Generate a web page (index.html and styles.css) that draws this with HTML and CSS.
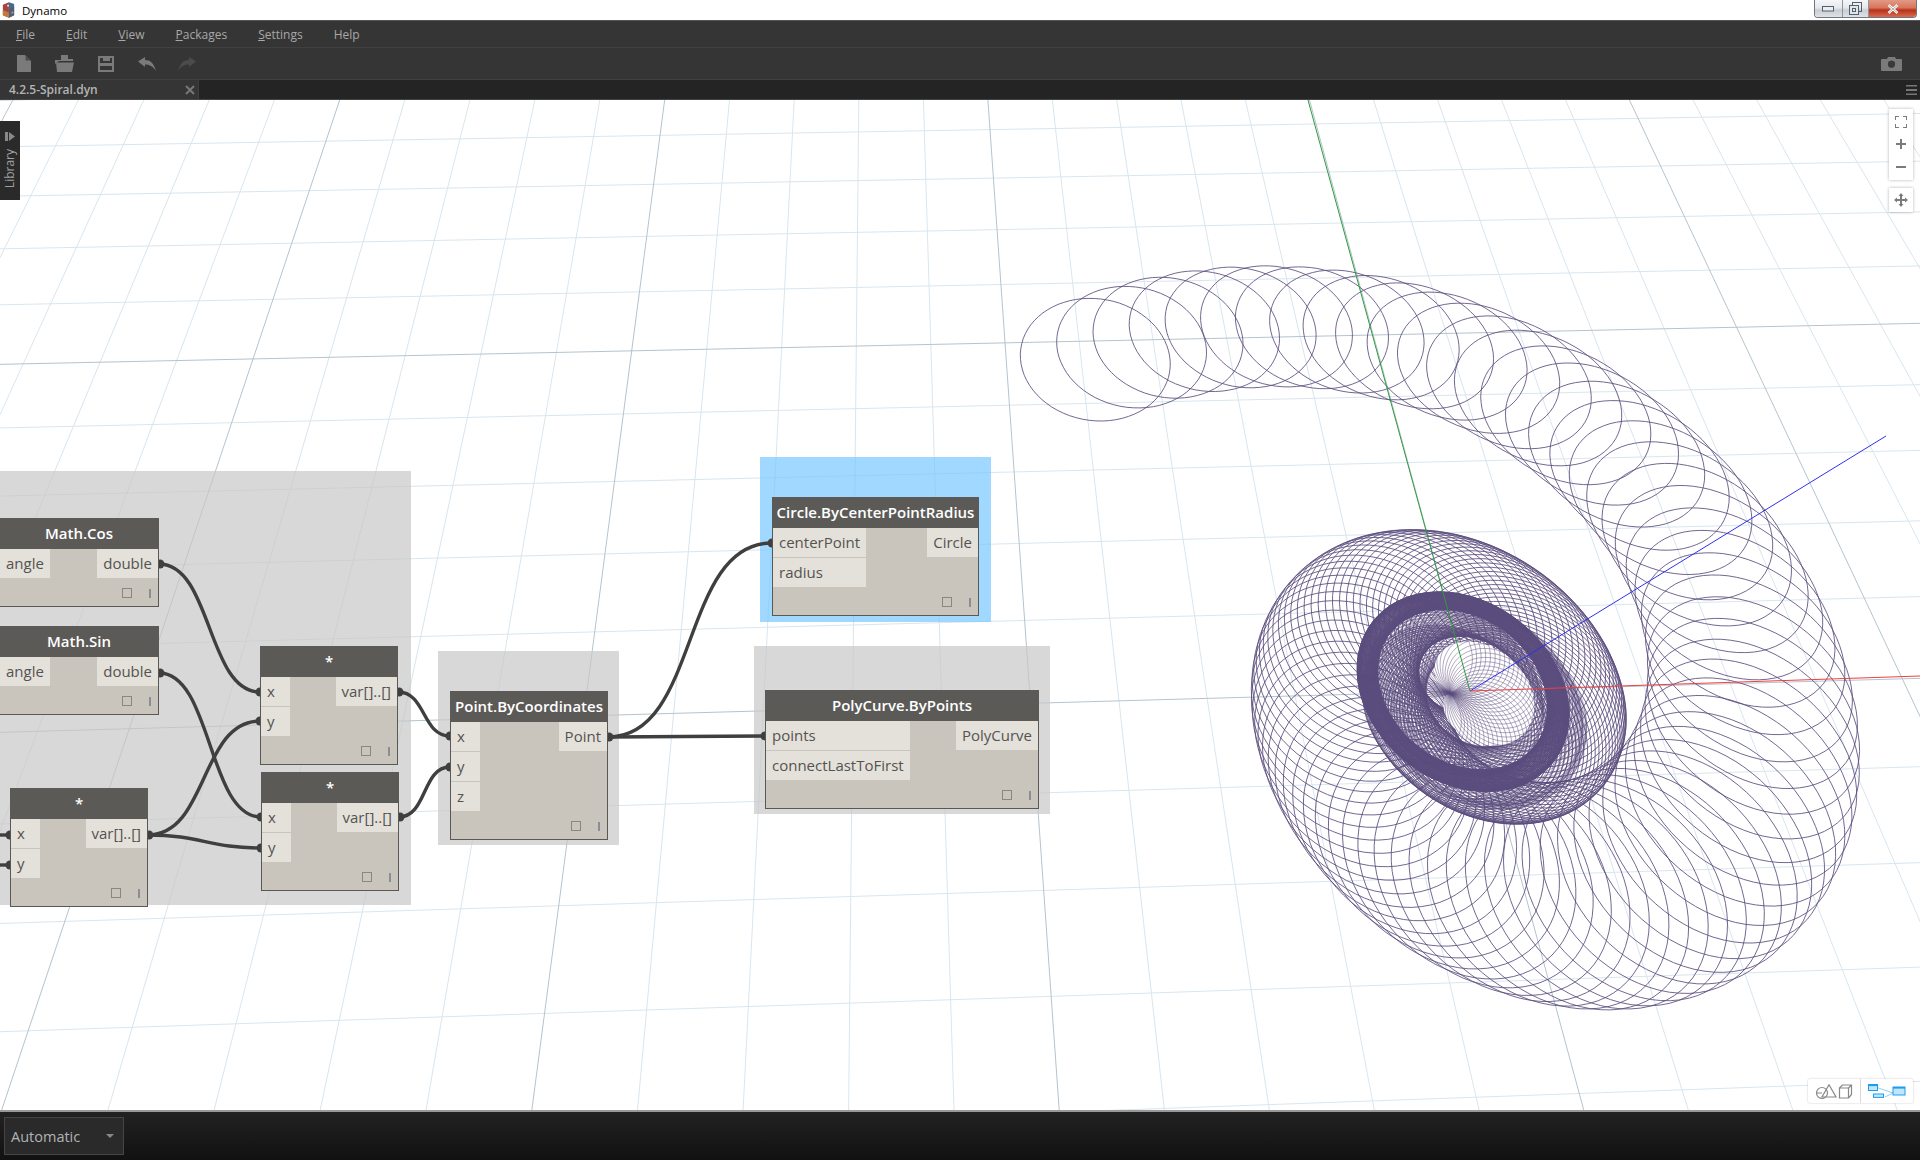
FILE: index.html
```html
<!DOCTYPE html>
<html lang="en">
<head>
<meta charset="utf-8">
<title>Dynamo</title>
<link rel="stylesheet" href="styles.css">
</head>
<body>
<header class="titlebar">
  <svg class="app-logo" viewBox="0 0 15 18"><polygon points="1,3 8,0 8,18 1,15" fill="#a8433f"/><polygon points="8,0 14,2 14,15 8,18" fill="#3f6f8c"/><polygon points="8,8 14,5 14,15 8,18" fill="#5a5a78"/><polygon points="1,9 8,12 8,18 1,15" fill="#c07a3a"/><rect x="6" y="3" width="2" height="2" fill="#e8e8e8"/><rect x="11" y="11" width="2" height="2" fill="#7fbf8a"/></svg>
  <span class="app-name">Dynamo</span>
  <div class="win-buttons">
    <div class="win-btn win-min"><svg width="13" height="6" viewBox="0 0 13 6"><rect x="0.5" y="0.5" width="11" height="4.5" fill="#e8eef4" stroke="#56606c"/></svg></div>
    <div class="win-btn win-max"><svg width="13" height="13" viewBox="0 0 13 13"><rect x="3.5" y="0.5" width="9" height="9" fill="none" stroke="#56606c"/><rect x="0.5" y="3.5" width="9" height="9" fill="#e0e6ec" stroke="#56606c"/><rect x="3.5" y="6.5" width="3" height="3" fill="none" stroke="#56606c"/></svg></div>
    <div class="win-btn win-close"><svg width="12" height="10" viewBox="0 0 12 10"><path d="M1.5 1 L10.5 9 M10.5 1 L1.5 9" stroke="#fff" stroke-width="2.6"/><path d="M1.5 1 L10.5 9 M10.5 1 L1.5 9" stroke="#5a5a5a" stroke-width="0.5"/></svg></div>
  </div>
</header>
<nav class="menubar">
  <span class="menu-item"><u>F</u>ile</span>
  <span class="menu-item"><u>E</u>dit</span>
  <span class="menu-item"><u>V</u>iew</span>
  <span class="menu-item"><u>P</u>ackages</span>
  <span class="menu-item"><u>S</u>ettings</span>
  <span class="menu-item">Help</span>
</nav>
<div class="toolbar">
  <svg class="tool tool-new" viewBox="0 0 14 17"><path d="M0 0 H8 L14 6 V17 H0 Z" fill="#7a7a7a"/><path d="M8.6 0 L14 5.4 H8.6 Z" fill="#4c4c4c"/></svg>
  <svg class="tool tool-open" viewBox="0 0 20 17"><path d="M6 0 H13 V4 H18 V6 H4 L0 9 V5 H6 Z" fill="#7a7a7a"/><path d="M1 7.5 H19 L17 17 H2 Z" fill="#7a7a7a"/></svg>
  <svg class="tool tool-save" viewBox="0 0 16 16"><path d="M0 0 H16 V16 H0 Z M2 2 V7 H14 V2 Z M2 10 V14 H14 V10 Z" fill-rule="evenodd" fill="#7a7a7a"/><rect x="5" y="2" width="7" height="3" fill="#7a7a7a"/></svg>
  <svg class="tool tool-undo" viewBox="0 0 18 14"><path d="M0 4.5 L7 0 V3 C12 3 16 6 18 14 C15 9 11 7.5 7 7.5 V10 Z" fill="#7a7a7a"/></svg>
  <svg class="tool tool-redo" viewBox="0 0 18 14"><path d="M18 4.5 L11 0 V3 C6 3 2 6 0 14 C3 9 7 7.5 11 7.5 V10 Z" fill="#4b4b4b"/></svg>
  <svg class="tool tool-camera" viewBox="0 0 21 14"><path d="M1 2 H6 L7 0 H14 L15 2 H20 Q21 2 21 3 V13 Q21 14 20 14 H1 Q0 14 0 13 V3 Q0 2 1 2 Z M10.5 3.8 A3.4 3.4 0 1 0 10.5 10.6 A3.4 3.4 0 1 0 10.5 3.8 Z" fill-rule="evenodd" fill="#7a7a7a"/><circle cx="10.5" cy="7.2" r="3.4" fill="#3a3a3a"/></svg>
</div>
<div class="tabbar">
  <div class="tab"><span class="tab-name">4.2.5-Spiral.dyn</span><svg class="tab-x" viewBox="0 0 10 10"><path d="M1 1 L9 9 M9 1 L1 9" stroke="#777" stroke-width="2"/></svg></div>
  <svg class="tab-menu" viewBox="0 0 11 10"><path d="M0 0.5 H11 M0 5 H11 M0 9.5 H11" stroke="#777" stroke-width="2"/></svg>
</div>
<main class="canvas">
  <svg class="layer" id="scene" viewBox="0 100 1920 1010"></svg>
  <div class="group group-math"></div>
  <div class="group group-point"></div>
  <div class="group group-poly"></div>
  <div class="group group-circle"></div>
  <svg class="layer" viewBox="0 100 1920 1010">
    <g class="wires">
      <path d="M159 564 C212 564 207 692 260 692"/>
      <path d="M159 673 C212 673 208 817 261 817"/>
      <path d="M148 835 C208 835 200 721 260 721"/>
      <path d="M148 835 C200 835 210 848 261 848"/>
      <path d="M398 692 C426 692 422 736 450 736"/>
      <path d="M399 817 C427 817 422 767 450 767"/>
      <path d="M608 737 C700 737 680 543 772 543"/>
      <path d="M608 737 C680 737 690 736 765 736"/>
      <path d="M0 835 H10"/>
      <path d="M0 865 H10"/>
    </g>
    <g class="nubs">
      <circle cx="160" cy="564" r="4.5"/><circle cx="160" cy="673" r="4.5"/>
      <circle cx="260" cy="692" r="4.5"/><circle cx="260" cy="721" r="4.5"/>
      <circle cx="399" cy="692" r="4.5"/><circle cx="261" cy="817" r="4.5"/>
      <circle cx="261" cy="848" r="4.5"/><circle cx="400" cy="817" r="4.5"/>
      <circle cx="149" cy="835" r="4.5"/><circle cx="10" cy="835" r="4.5"/>
      <circle cx="10" cy="865" r="4.5"/><circle cx="450" cy="736" r="4.5"/>
      <circle cx="450" cy="767" r="4.5"/><circle cx="609" cy="737" r="4.5"/>
      <circle cx="772" cy="543" r="4.5"/><circle cx="765" cy="736" r="4.5"/>
    </g>
  </svg>

  <section class="node node-cos">
    <div class="node-title">Math.Cos</div>
    <div class="node-body"><div class="ports"><div class="port">angle</div></div><div class="ports ports-out"><div class="port">double</div></div></div>
    <div class="node-foot"><span class="foot-box"></span><span class="foot-bar"></span></div>
  </section>
  <section class="node node-sin">
    <div class="node-title">Math.Sin</div>
    <div class="node-body"><div class="ports"><div class="port">angle</div></div><div class="ports ports-out"><div class="port">double</div></div></div>
    <div class="node-foot"><span class="foot-box"></span><span class="foot-bar"></span></div>
  </section>
  <section class="node node-mul-a">
    <div class="node-title">*</div>
    <div class="node-body"><div class="ports"><div class="port">x</div><div class="port">y</div></div><div class="ports ports-out"><div class="port">var[]..[]</div></div></div>
    <div class="node-foot"><span class="foot-box"></span><span class="foot-bar"></span></div>
  </section>
  <section class="node node-mul-b">
    <div class="node-title">*</div>
    <div class="node-body"><div class="ports"><div class="port">x</div><div class="port">y</div></div><div class="ports ports-out"><div class="port">var[]..[]</div></div></div>
    <div class="node-foot"><span class="foot-box"></span><span class="foot-bar"></span></div>
  </section>
  <section class="node node-mul-c">
    <div class="node-title">*</div>
    <div class="node-body"><div class="ports"><div class="port">x</div><div class="port">y</div></div><div class="ports ports-out"><div class="port">var[]..[]</div></div></div>
    <div class="node-foot"><span class="foot-box"></span><span class="foot-bar"></span></div>
  </section>
  <section class="node node-point">
    <div class="node-title">Point.ByCoordinates</div>
    <div class="node-body"><div class="ports"><div class="port">x</div><div class="port">y</div><div class="port">z</div></div><div class="ports ports-out"><div class="port">Point</div></div></div>
    <div class="node-foot"><span class="foot-box"></span><span class="foot-bar"></span></div>
  </section>
  <section class="node node-circle">
    <div class="node-title">Circle.ByCenterPointRadius</div>
    <div class="node-body"><div class="ports"><div class="port">centerPoint</div><div class="port">radius</div></div><div class="ports ports-out"><div class="port">Circle</div></div></div>
    <div class="node-foot"><span class="foot-box"></span><span class="foot-bar"></span></div>
  </section>
  <section class="node node-poly">
    <div class="node-title">PolyCurve.ByPoints</div>
    <div class="node-body"><div class="ports"><div class="port">points</div><div class="port">connectLastToFirst</div></div><div class="ports ports-out"><div class="port">PolyCurve</div></div></div>
    <div class="node-foot"><span class="foot-box"></span><span class="foot-bar"></span></div>
  </section>

  <aside class="library">
    <svg class="library-icon" viewBox="0 0 10 9"><rect x="0" y="0" width="3" height="9" fill="#888"/><polygon points="4,0 10,4.5 4,9" fill="#888"/></svg>
    <span class="library-label">Library</span>
  </aside>

  <div class="nav-stack">
    <div class="nav-box nav-zoom">
      <svg class="nav-icon" viewBox="0 0 12 12"><path d="M0 4 V0 H4 M8 0 H12 V4 M12 8 V12 H8 M4 12 H0 V8" fill="none" stroke="#7b7b7b" stroke-width="2"/></svg>
      <svg class="nav-icon" viewBox="0 0 12 12"><path d="M6 1 V11 M1 6 H11" stroke="#7b7b7b" stroke-width="2"/></svg>
      <svg class="nav-icon" viewBox="0 0 12 12"><path d="M1 6 H11" stroke="#7b7b7b" stroke-width="2"/></svg>
    </div>
    <div class="nav-box nav-pan">
      <svg class="nav-icon" viewBox="0 0 14 14"><path d="M7 0 L9.5 3 H8 V6 H11 V4.5 L14 7 L11 9.5 V8 H8 V11 H9.5 L7 14 L4.5 11 H6 V8 H3 V9.5 L0 7 L3 4.5 V6 H6 V3 H4.5 Z" fill="#7b7b7b"/></svg>
    </div>
  </div>

  <div class="view-toggle">
    <div class="toggle-half">
      <svg class="toggle-geo" viewBox="0 0 38 15"><circle cx="7" cy="9" r="5.5" fill="none" stroke="#888" stroke-width="1.2"/><path d="M14 0.8 L21 13 H7 Z M1.5 9 H7" fill="none" stroke="#888" stroke-width="1.2"/><path d="M24.5 4 H33.5 V14 H24.5 Z M24.5 4 L27.5 1 H36.5 V10.5 L33.5 14 M33.5 4 L36.5 1" fill="none" stroke="#888" stroke-width="1.2"/></svg>
    </div>
    <div class="toggle-half toggle-graph">
      <svg class="toggle-net" viewBox="0 0 38 15"><path d="M9 3.5 L25 9 M17 13 L25 9" stroke="#8fd0f5" stroke-width="1"/><rect x="0.5" y="0.5" width="9" height="6" fill="#bfe6fb" stroke="#1e9df0"/><rect x="0.5" y="0.5" width="9" height="1.6" fill="#1e9df0"/><rect x="5.5" y="10" width="10" height="3.4" fill="#bfe6fb" stroke="#1e9df0"/><rect x="25" y="3" width="12" height="8" fill="#bfe6fb" stroke="#1e9df0"/><rect x="25" y="3" width="12" height="1.6" fill="#1e9df0"/></svg>
    </div>
  </div>
</main>
<footer class="statusbar">
  <div class="run-select"><span class="run-label">Automatic</span><span class="run-arrow"></span></div>
</footer>
<script src="script.js"></script>
</body>
</html>
```
FILE: styles.css
```css
* { box-sizing: border-box; }
html, body { margin: 0; padding: 0; }
body {
  width: 1920px;
  height: 1160px;
  overflow: hidden;
  display: flex;
  flex-direction: column;
  font-family: "Open Sans", "Liberation Sans", sans-serif;
  background: #fff;
}
.titlebar {
  height: 21px;
  flex: none;
  display: flex;
  align-items: flex-start;
  background: #fff;
  border-bottom: 1px solid #555;
}
.app-logo { width: 13px; height: 16px; margin: 2px 0 0 2px; }
.app-name { font-size: 11.5px; line-height: 21px; margin-left: 7px; color: #000; }
.win-buttons {
  margin-left: auto;
  margin-right: 3px;
  height: 18px;
  display: flex;
  border: 1px solid #6f7780;
  border-top: none;
  border-radius: 0 0 4px 4px;
  overflow: hidden;
}
.win-btn { display: flex; align-items: center; justify-content: center; }
.win-min, .win-max {
  background: linear-gradient(#f4f6f8 0, #e6e9ec 45%, #c9ced3 60%, #dfe3e6 100%);
  border-right: 1px solid #8d949b;
}
.win-min { width: 28px; }
.win-max { width: 26px; }
.win-close { width: 47px; background: linear-gradient(#e09a86 0, #d9755c 45%, #b8321c 60%, #d96a50 100%); }

.menubar {
  height: 27px;
  flex: none;
  display: flex;
  align-items: center;
  padding-left: 16px;
  gap: 31px;
  background: #353535;
  border-bottom: 1px solid #404040;
}
.menu-item { font-size: 12px; color: #a8a8a8; }

.toolbar {
  height: 32px;
  flex: none;
  display: flex;
  align-items: center;
  background: #353535;
  border-bottom: 1px solid #404040;
}
.tool { flex: none; }
.tool-new { width: 14px; height: 17px; margin-left: 17px; }
.tool-open { width: 20px; height: 17px; margin-left: 24px; }
.tool-save { width: 16px; height: 16px; margin-left: 23px; }
.tool-undo { width: 18px; height: 14px; margin-left: 24px; }
.tool-redo { width: 18px; height: 14px; margin-left: 22px; }
.tool-camera { width: 21px; height: 14px; margin-left: auto; margin-right: 18px; }

.tabbar {
  height: 20px;
  flex: none;
  display: flex;
  align-items: center;
  background: #242424;
  border-bottom: 1px solid #444;
}
.tab {
  width: 199px;
  height: 19px;
  display: flex;
  align-items: center;
  padding: 0 3px 0 9px;
  background: #353535;
  border-right: 1px solid #3f3f3f;
}
.tab-name { font-size: 12px; font-weight: 600; color: #b4b4b4; }
.tab-x { width: 10px; height: 10px; margin-left: auto; }
.tab-menu { width: 11px; height: 10px; margin-left: auto; margin-right: 3px; }

.canvas {
  position: relative;
  flex: 1;
  overflow: hidden;
  background: #fff;
}
.layer { position: absolute; left: 0; top: 0; width: 1920px; height: 1010px; }
.grid-minor { stroke: #d8e6ef; stroke-width: 1; fill: none; }
.grid-major { stroke: #b4c4ce; stroke-width: 1; fill: none; }
.ring { stroke: #5b4c7c; stroke-width: 1; stroke-opacity: .85; fill: none; }
.ring-thin { stroke: #5b4c7c; stroke-width: .8; stroke-opacity: .6; fill: none; }
.hole { fill: #fff; stroke: none; }
.axis-x { stroke: #f04040; stroke-width: 1; fill: none; }
.axis-y { stroke: #2f9a3c; stroke-width: 1; fill: none; }
.axis-z { stroke: #3030ee; stroke-width: 1; fill: none; }

.group { position: absolute; }
.group-math { left: 0; top: 371px; width: 411px; height: 434px; background: rgba(200,200,200,.7); }
.group-point { left: 438px; top: 551px; width: 181px; height: 194px; background: rgba(200,200,200,.7); }
.group-poly { left: 754px; top: 546px; width: 296px; height: 168px; background: rgba(200,200,200,.7); }
.group-circle { left: 760px; top: 357px; width: 231px; height: 165px; background: rgba(120,200,255,.7); }

.wires path { fill: none; stroke: #3f3f3f; stroke-width: 3.4; }
.nubs circle { fill: #3f3f3f; }

.node {
  position: absolute;
  display: flex;
  flex-direction: column;
  background: #c9c5bd;
  border: 1px solid #5a5855;
  border-top: none;
}
.node-cos { left: -1px; top: 418px; width: 160px; }
.node-sin { left: -1px; top: 526px; width: 160px; }
.node-mul-a { left: 260px; top: 546px; width: 138px; }
.node-mul-b { left: 261px; top: 672px; width: 138px; }
.node-mul-c { left: 10px; top: 688px; width: 138px; }
.node-point { left: 450px; top: 591px; width: 158px; }
.node-circle { left: 772px; top: 397px; width: 207px; }
.node-poly { left: 765px; top: 590px; width: 274px; }

.node-title {
  height: 31px;
  margin: 0 -1px;
  background: #5c5a57;
  color: #fff;
  font-size: 15px;
  font-weight: 600;
  line-height: 30px;
  text-align: center;
  white-space: nowrap;
}
.node-body { display: flex; justify-content: space-between; align-items: flex-start; }
.ports { display: flex; flex-direction: column; gap: 1px; }
.ports-out { text-align: right; }
.port {
  min-width: 29px;
  height: 29px;
  padding: 0 6px;
  background: #e4e1db;
  color: #55534f;
  font-size: 15px;
  line-height: 28px;
  white-space: nowrap;
}
.node-foot {
  height: 28px;
  position: relative;
  flex: none;
}
.foot-box {
  position: absolute;
  right: 26px;
  bottom: 8px;
  width: 10px;
  height: 10px;
  border: 1px solid #8b8780;
}
.foot-bar {
  position: absolute;
  right: 7px;
  bottom: 8px;
  width: 2px;
  height: 9px;
  background: #8a8e94;
}

.library {
  position: absolute;
  left: 0;
  top: 21px;
  width: 20px;
  height: 79px;
  background: #2a2a2a;
  display: flex;
  flex-direction: column;
  align-items: center;
  padding-top: 11px;
  gap: 8px;
}
.library-icon { width: 10px; height: 9px; }
.library-label {
  writing-mode: vertical-rl;
  transform: rotate(180deg);
  font-size: 12px;
  line-height: 18px;
  color: #a0a0a0;
}

.nav-stack {
  position: absolute;
  left: 1889px;
  top: 9px;
  width: 24px;
  display: flex;
  flex-direction: column;
  gap: 8px;
}
.nav-box {
  background: #fff;
  box-shadow: 0 0 3px rgba(0,0,0,.3);
  display: flex;
  flex-direction: column;
  align-items: center;
  justify-content: space-around;
}
.nav-zoom { height: 71px; padding: 2px 0; }
.nav-pan { height: 24px; }
.nav-icon { width: 12px; height: 12px; }
.nav-pan .nav-icon { width: 14px; height: 14px; }

.view-toggle {
  position: absolute;
  left: 1808px;
  top: 979px;
  width: 105px;
  height: 24px;
  display: flex;
  background: #fff;
  border-radius: 2px;
  box-shadow: 0 0 2px rgba(0,0,0,.25);
}
.toggle-half { width: 53px; display: flex; align-items: center; justify-content: center; border-right: 1px solid #d8d8d8; }
.toggle-graph { flex: 1; border-right: none; }
.toggle-geo { width: 38px; height: 15px; }
.toggle-net { width: 38px; height: 15px; }

.statusbar {
  height: 50px;
  flex: none;
  padding: 5px 0 0 4px;
  border-top: 2px solid #999;
  background: linear-gradient(#222, #111);
}
.run-select {
  width: 120px;
  height: 38px;
  display: flex;
  align-items: center;
  padding: 0 9px 0 6px;
  background: #2a2a2a;
  border: 1px solid #454545;
}
.run-label { font-size: 14.5px; color: #b0b4b8; }
.run-arrow {
  margin-left: auto;
  width: 0;
  height: 0;
  border-left: 4px solid transparent;
  border-right: 4px solid transparent;
  border-top: 4px solid #888;
}
```
FILE: script.js
```js
(function () {
  var NS = 'http://www.w3.org/2000/svg';
  var scene = document.getElementById('scene');
  var A = 0.00165, B = 0.0388;

  function H(u, v) {
    var w = 1 + u * A + v * B;
    return [
      (1470 + u * A * 54300 + v * B * 875) / w,
      (691 + u * A * -796 + v * B * -1500) / w
    ];
  }
  function add(d, cls) {
    var p = document.createElementNS(NS, 'path');
    p.setAttribute('d', d);
    p.setAttribute('class', cls);
    scene.appendChild(p);
    return p;
  }
  function seg(a, b) {
    return 'M' + a[0].toFixed(1) + ' ' + a[1].toFixed(1) + 'L' + b[0].toFixed(1) + ' ' + b[1].toFixed(1);
  }
  function circle(cu, cv, R) {
    var n = 72, d = '';
    for (var a = 0; a <= n; a++) {
      var ph = a / n * 2 * Math.PI;
      var q = H(cu + R * Math.cos(ph), cv + R * Math.sin(ph));
      d += (a ? 'L' : 'M') + q[0].toFixed(1) + ' ' + q[1].toFixed(1);
    }
    return d;
  }

  var i, minor = '', major = '';
  for (i = -25; i <= 15; i++) {
    var dv = seg(H(i, -6), H(i, 12));
    if (i % 5 === 0) major += dv; else minor += dv;
  }
  for (i = -6; i <= 12; i++) {
    var dh = seg(H(-30, i), H(20, i));
    if (i % 5 === 0) major += dh; else minor += dh;
  }
  add(minor, 'grid-minor');
  add(major, 'grid-major');

  var k, t, th;
  var TWO = 2 * Math.PI;

  /* long spiral: tail, tube and outer dome */
  var T = 4.858;
  var table = [[3.1, 1.0], [3.5, 1.15], [3.75, 1.14], [4, 1.12], [4.25, 1.12], [4.5, 1.13], [4.858, 1.0]];
  function radius(t) {
    for (var k = 1; k < table.length; k++) {
      if (t <= table[k][0]) {
        var f = (t - table[k - 1][0]) / (table[k][0] - table[k - 1][0]);
        return table[k - 1][1] + f * (table[k][1] - table[k - 1][1]);
      }
    }
    return table[table.length - 1][1];
  }
  for (t = T; t >= 3.1; t -= 1 / 72) {
    th = Math.PI + TWO * t;
    var r = 0.05 + 6.02 * Math.exp(-(T - t) * 1.78);
    add(circle(r * Math.cos(th), r * Math.sin(th), radius(t)), 'ring');
  }

  /* dense moire band inside the ring */
  for (k = 0; k < 90; k++) {
    th = k / 90 * TWO * 2;
    var rm = 0.30 + 0.05 * k / 90;
    add(circle(0.02 + rm * Math.cos(th), -0.1 + rm * Math.sin(th), 0.85 + 0.03 * k / 90), 'ring-thin');
  }
  /* dark ring */
  for (k = 0; k < 90; k++) {
    th = k / 90 * TWO * 2;
    add(circle(-0.08 + 0.11 * Math.cos(th), 0.05 + 0.11 * Math.sin(th), 1.05 + 0.02 * k / 90), 'ring');
  }

  /* cardioid hole with the fan of circles through its cusp */
  var a = 0.235, cx = 0.0, cy = -0.02, hole = '';
  for (k = 0; k <= 120; k++) {
    var ph = k / 120 * TWO;
    var rho = 2 * a * (1 + Math.cos(ph));
    var h = H(cx - a + rho * Math.cos(ph), cy + rho * Math.sin(ph));
    hole += (k ? 'L' : 'M') + h[0].toFixed(1) + ' ' + h[1].toFixed(1);
  }
  add(hole + 'Z', 'hole');
  var pu = cx - a, pv = cy;
  for (k = 0; k < 46; k++) {
    var f = k / 45;
    th = (-150 + 260 * f) * Math.PI / 180;
    var Rf = 0.44 + 0.14 * f;
    add(circle(pu + Rf * Math.cos(th), pv + Rf * Math.sin(th), Rf), 'ring-thin');
  }

  add('M1470 691L1308 100', 'axis-y');
  add('M1470 691L1886 436', 'axis-z');
  add('M1470 691L1920 676', 'axis-x');
})();
```
